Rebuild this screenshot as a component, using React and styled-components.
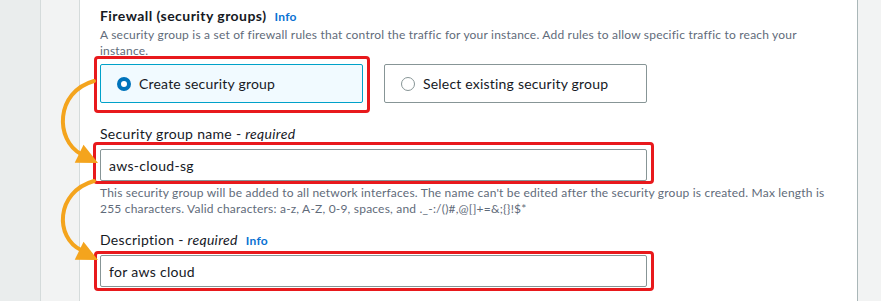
import React from 'react';
import styled, {createGlobalStyle} from 'styled-components';

const GlobalStyle = createGlobalStyle`
    html, body { margin: 0; padding: 0; background: #ffffff; }
    body { font-family: Lato, "Liberation Sans", Arial, sans-serif; color: #16191f; letter-spacing: 0.2px; }
    * { box-sizing: border-box; }
`;

const Page = styled.div`
    position: relative;
    display: flex;
    width: 881px;
    height: 301px;
    overflow: hidden;
`;

const Rail = styled.div`
    flex: 0 0 ${p => p.w}px;
    background: ${p => p.bg};
    border-left: ${p => p.borderLeft || 'none'};
    border-right: ${p => p.borderRight || 'none'};
`;

const Panel = styled.div`
    flex: 1;
    background: #ffffff;
    padding: 6px 20px 0 20px;
`;

const Title = styled.h3`
    margin: 0;
    font-size: 14px;
    line-height: 20px;
    font-weight: 700;
    letter-spacing: 0.45px;
    color: #16191f;
`;

const InfoLink = styled.span`
    margin-left: 8px;
    font-size: 12px;
    font-weight: 700;
    letter-spacing: 0.3px;
    color: #0972d3;
`;

const Desc = styled.p`
    margin: ${p => p.mt || 0}px 0 0 0;
    font-size: 12px;
    line-height: 16px;
    color: #5f6b7a;
`;

const Form = styled.div`
    width: 547px;
`;

const TileGrid = styled.div`
    display: grid;
    grid-template-columns: 263px 263px;
    column-gap: 21px;
    margin-top: 5px;
`;

const Slot = styled.div`
    position: relative;
`;

const Tile = styled.div`
    display: flex;
    align-items: center;
    gap: 8px;
    height: 39px;
    padding: 0 16px;
    border: 1px solid ${p => (p.selected ? '#00a1c9' : '#879596')};
    border-radius: 2px;
    background: ${p => (p.selected ? '#f1faff' : '#ffffff')};
    font-size: 14px;
    letter-spacing: 0.2px;
    color: #16191f;
`;

const Radio = styled.span`
    flex: 0 0 14px;
    width: 14px;
    height: 14px;
    border-radius: 50%;
    background: #ffffff;
    border: ${p => (p.checked ? '4px solid #0073bb' : '1.5px solid #879596')};
`;

const Field = styled.div`
    margin-top: ${p => p.mt}px;
`;

const Label = styled.div`
    font-size: 14px;
    line-height: 20px;
    letter-spacing: 0.3px;
    color: #16191f;
    margin-bottom: ${p => p.mb}px;
    em { font-style: italic; }
`;

const Input = styled.div`
    display: flex;
    align-items: center;
    height: 32px;
    padding: 0 8px;
    border: 1px solid #879596;
    border-radius: 2px;
    font-size: 14px;
    letter-spacing: 0.3px;
    color: #16191f;
`;

const Highlight = styled.div`
    position: absolute;
    top: ${p => p.t}px;
    left: ${p => p.l}px;
    right: ${p => p.r}px;
    bottom: ${p => p.b}px;
    border: 3px solid #e8191c;
    border-radius: 4px;
    pointer-events: none;
`;

const Arrows = styled.svg`
    position: absolute;
    left: 0;
    top: 0;
    pointer-events: none;
`;

const arrowHead = (tx, ty, dx, dy, len, half) => {
    const n = Math.hypot(dx, dy);
    const ux = dx / n, uy = dy / n;
    const bx = tx - ux * len, by = ty - uy * len;
    return `${tx},${ty} ${bx - uy * half},${by + ux * half} ${bx + uy * half},${by - ux * half}`;
};

const App = () => {
    return (
        <Page>
            <GlobalStyle/>
            <Rail w={41} bg="#eaeded" borderRight="1px solid #d5dbdb"/>
            <Rail w={39} bg="#f2f3f3" borderRight="1px solid #d5dbdb"/>
            <Panel>
                <Title>Firewall (security groups)<InfoLink>Info</InfoLink></Title>
                <Desc>
                    A security group is a set of firewall rules that control the traffic for your instance. Add rules to allow specific traffic to reach your instance.
                </Desc>
                <Form>
                    <TileGrid>
                        <Slot>
                            <Tile selected>
                                <Radio checked/>
                                Create security group
                            </Tile>
                            <Highlight t={-8} l={-6} r={-7} b={-10}/>
                        </Slot>
                        <Tile>
                            <Radio/>
                            Select existing security group
                        </Tile>
                    </TileGrid>
                    <Field mt={21}>
                        <Label mb={5}>Security group name - <em>required</em></Label>
                        <Slot>
                            <Input>aws-cloud-sg</Input>
                            <Highlight t={-7} l={-7} r={-7} b={-3}/>
                        </Slot>
                    </Field>
                </Form>
                <Desc mt={4}>
                    This security group will be added to all network interfaces. The name can't be edited after the security group is created. Max length is 255 characters. Valid characters: a-z, A-Z, 0-9, spaces, and ._-:/()#,@[]+=&amp;;{'{}'}!$*
                </Desc>
                <Form>
                    <Field mt={13}>
                        <Label mb={4}>Description - <em>required</em><InfoLink>Info</InfoLink></Label>
                        <Slot>
                            <Input>for aws cloud</Input>
                            <Highlight t={-4} l={-6} r={-7} b={-4}/>
                        </Slot>
                    </Field>
                </Form>
            </Panel>
            <Rail w={24} bg="#f2f3f3" borderLeft="1px solid #aab7b8"/>
            <Arrows width="881" height="301" viewBox="0 0 881 301">
                <path d="M 94 81 C 55 92, 55 140, 81 154" fill="none" stroke="#f4a41d" strokeWidth="4" strokeLinecap="round"/>
                <polygon points={arrowHead(98, 163, 0.9, 0.44, 21, 10)} fill="#f4a41d"/>
                <path d="M 94 181 C 55 192, 55 238, 81 250" fill="none" stroke="#f4a41d" strokeWidth="4" strokeLinecap="round"/>
                <polygon points={arrowHead(98, 260, 0.9, 0.44, 21, 10)} fill="#f4a41d"/>
            </Arrows>
        </Page>
    );
};

export default App;
